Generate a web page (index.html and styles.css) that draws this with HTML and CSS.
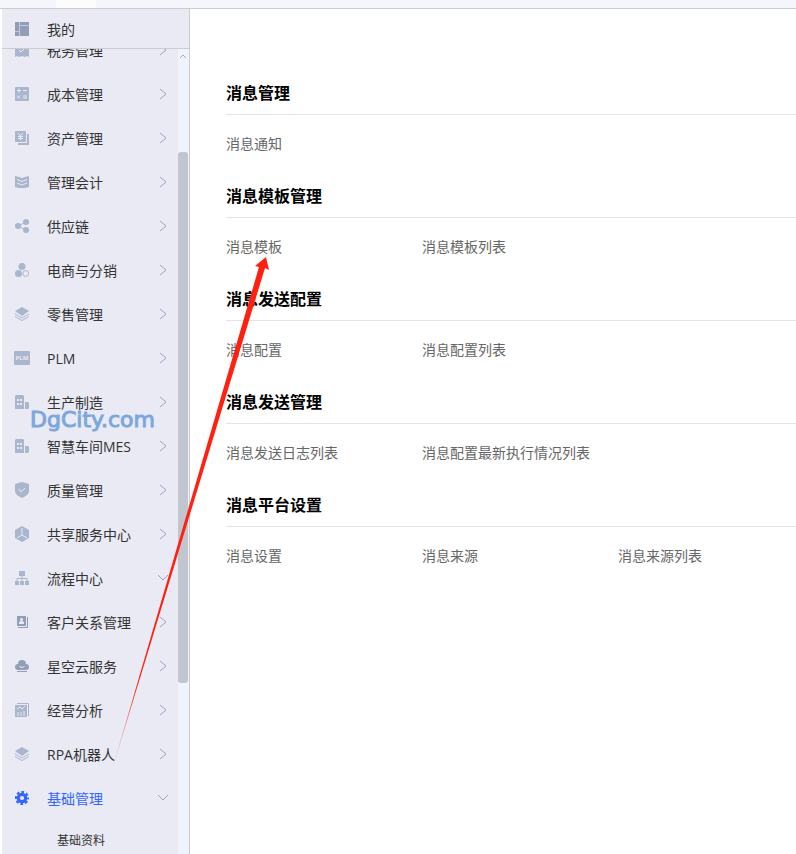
FILE: index.html
```html
<!DOCTYPE html>
<html lang="zh-CN">

<head>
    <meta charset="UTF-8">
    <meta name="viewport" content="width=device-width, initial-scale=1.0">
    <title>基础管理</title>
    <link rel="stylesheet" href="styles.css">
</head>

<body>
    <div class="topbar"><span class="tab"></span></div>
    <div class="layout">
        <aside class="sidebar">
            <button class="mine">
                <svg class="icon dark" viewBox="0 0 14 14"><path d="M0 0h4v9H0zM0 10h4v4H0zM5 0h9v3H5zM5 4h9v10H5z"/><path class="seam" d="M4.500 0v14M5 3.500h9M0 9.500h4"/></svg>
                <span>我的</span>
            </button>
            <div class="menu-wrap">
                <ul class="menu">
                    <li><button class="item">
                        <svg class="icon" viewBox="0 0 14 14"><path d="M0 0h14v14l-2-1-2 1-3-1-3 1-2-1-2 1z"/><path class="line" d="M4 7l2 2 4-4"/></svg>
                        <span>税务管理</span><svg class="arrow" viewBox="0 0 12 12"><path d="M3 1l6 5-6 5"/></svg>
                    </button></li>
                    <li><button class="item">
                        <svg class="icon" viewBox="0 0 14 14"><rect width="14" height="14" rx="1"/><path class="line" d="M2 3.500h4M4 1.500v4M8 3.500h4M2 8.500l3 3M5 8.500l-3 3M8 9h4M8 11h4"/></svg>
                        <span>成本管理</span><svg class="arrow" viewBox="0 0 12 12"><path d="M3 1l6 5-6 5"/></svg>
                    </button></li>
                    <li><button class="item">
                        <svg class="icon" viewBox="0 0 14 14"><rect width="11" height="11" rx="1"/><path d="M12 3h2v11H3v-2h9z"/><path class="line" d="M3 2l2.500 3L8 2M5.500 5v4M3 5.500h5M3 7.500h5"/></svg>
                        <span>资产管理</span><svg class="arrow" viewBox="0 0 12 12"><path d="M3 1l6 5-6 5"/></svg>
                    </button></li>
                    <li><button class="item">
                        <svg class="icon" viewBox="0 0 14 14"><path d="M0 1l4 1 3 1 3-1 4-1v11l-4 1H4l-4-1z"/><path class="line" d="M2 4.500l5 2 5-2M2 8l5 2 5-2"/></svg>
                        <span>管理会计</span><svg class="arrow" viewBox="0 0 12 12"><path d="M3 1l6 5-6 5"/></svg>
                    </button></li>
                    <li><button class="item">
                        <svg class="icon" viewBox="0 0 14 14"><path class="wire" d="M11 3L3 7l8 4"/><circle cx="3" cy="7" r="3"/><circle cx="11" cy="3" r="3"/><circle cx="11" cy="11" r="3"/></svg>
                        <span>供应链</span><svg class="arrow" viewBox="0 0 12 12"><path d="M3 1l6 5-6 5"/></svg>
                    </button></li>
                    <li><button class="item">
                        <svg class="icon" viewBox="0 0 14 14"><circle cx="7" cy="3.500" r="3.500"/><circle cx="3.500" cy="10.500" r="3.500"/><circle class="wire" cx="10.800" cy="10.500" r="2.900"/></svg>
                        <span>电商与分销</span><svg class="arrow" viewBox="0 0 12 12"><path d="M3 1l6 5-6 5"/></svg>
                    </button></li>
                    <li><button class="item">
                        <svg class="icon" viewBox="0 0 14 14"><path d="M7 0l7 4-7 5-7-5z"/><path class="wire" d="M0 7l7 4 7-4M0 9.500l7 4 7-4"/></svg>
                        <span>零售管理</span><svg class="arrow" viewBox="0 0 12 12"><path d="M3 1l6 5-6 5"/></svg>
                    </button></li>
                    <li><button class="item">
                        <svg class="icon wide" viewBox="0 0 16 14"><rect width="16" height="14" rx="1"/><text x="8" y="9">PLM</text></svg>
                        <span>PLM</span><svg class="arrow" viewBox="0 0 12 12"><path d="M3 1l6 5-6 5"/></svg>
                    </button></li>
                    <li><button class="item">
                        <svg class="icon" viewBox="0 0 14 14"><path d="M1 0h7l1 1v13H0V1zM10 7h3l1 1v5l-1 1h-3z"/><path class="dots" d="M2 4h2v2H2zM5 4h2v2H5zM2 8h2v2H2zM5 8h2v2H5z"/></svg>
                        <span>生产制造</span><svg class="arrow" viewBox="0 0 12 12"><path d="M3 1l6 5-6 5"/></svg>
                    </button></li>
                    <li><button class="item">
                        <svg class="icon" viewBox="0 0 14 14"><path d="M1 0h7l1 1v13H0V1zM10 7h3l1 1v5l-1 1h-3z"/><path class="dots" d="M2 4h2v2H2zM5 4h2v2H5zM2 8h2v2H2zM5 8h2v2H5z"/></svg>
                        <span>智慧车间MES</span><svg class="arrow" viewBox="0 0 12 12"><path d="M3 1l6 5-6 5"/></svg>
                    </button></li>
                    <li><button class="item">
                        <svg class="icon tall" viewBox="0 0 14 16"><path d="M7 0l7 2v7c0 3-3 5-7 7-4-2-7-4-7-7V2z"/><path class="line" d="M4 7l2 3 4-4"/></svg>
                        <span>质量管理</span><svg class="arrow" viewBox="0 0 12 12"><path d="M3 1l6 5-6 5"/></svg>
                    </button></li>
                    <li><button class="item">
                        <svg class="icon tall" viewBox="0 0 14 16"><path d="M7 0l7 4v8l-7 4-7-4V4z"/><path class="line" d="M7 2v7M7 9l-5 3M7 9l5 3"/></svg>
                        <span>共享服务中心</span><svg class="arrow" viewBox="0 0 12 12"><path d="M3 1l6 5-6 5"/></svg>
                    </button></li>
                    <li><button class="item">
                        <svg class="icon" viewBox="0 0 14 14"><path d="M4 0h6v5H4zM0 10h4v4H0zM5 10h4v4H5zM10 10h4v4h-4z"/><path class="wire" d="M7 5v5M2 10V7.500h10V10"/></svg>
                        <span>流程中心</span><svg class="arrow" viewBox="0 0 12 12"><path d="M1 3l5 5 5-5"/></svg>
                    </button></li>
                    <li><button class="item">
                        <svg class="icon dark" viewBox="0 0 14 14"><rect x="2" y="1" width="9" height="10"/><path d="M12 2h1v11H3v-1h9z"/><path class="dots" d="M5 4l1-1h1l1 1v1L7 6l2 1v2H4V7l2-1-1-1z"/></svg>
                        <span>客户关系管理</span><svg class="arrow" viewBox="0 0 12 12"><path d="M3 1l6 5-6 5"/></svg>
                    </button></li>
                    <li><button class="item">
                        <svg class="icon dark" viewBox="0 0 14 14"><path d="M3 11a3 3 0 0 1 0-6 4 4 0 0 1 8 0 3 3 0 0 1 0 6zM2 12h10v1H2z"/><path class="line" d="M4.500 7.500q2.500 2 5 0"/></svg>
                        <span>星空云服务</span><svg class="arrow" viewBox="0 0 12 12"><path d="M3 1l6 5-6 5"/></svg>
                    </button></li>
                    <li><button class="item">
                        <svg class="icon" viewBox="0 0 14 14"><path d="M0 2h12v12H0z"/><path class="wire" d="M2 .500h11.500V13"/><path class="line" d="M2 6l3-2 2 2 3-3M3 9v4M6 9v4M9 8v5"/></svg>
                        <span>经营分析</span><svg class="arrow" viewBox="0 0 12 12"><path d="M3 1l6 5-6 5"/></svg>
                    </button></li>
                    <li><button class="item">
                        <svg class="icon" viewBox="0 0 14 14"><path d="M7 0l7 4-7 5-7-5z"/><path class="wire" d="M0 7l7 4 7-4M0 9.500l7 4 7-4"/></svg>
                        <span>RPA机器人</span><svg class="arrow" viewBox="0 0 12 12"><path d="M3 1l6 5-6 5"/></svg>
                    </button></li>
                    <li><button class="item active">
                        <svg class="icon gear" viewBox="0 0 14 14"><circle cx="7" cy="7" r="3.700" stroke-width="3.200"/><circle cx="7" cy="7" r="6" stroke-width="2.200" stroke-dasharray="2.700 2.012" stroke-dashoffset="1.350"/></svg>
                        <span>基础管理</span><svg class="arrow" viewBox="0 0 12 12"><path d="M1 3l5 5 5-5"/></svg>
                    </button></li>
                    <li><a class="sub" href="#">基础资料</a></li>
                </ul>
                <div class="scrollbar">
                    <svg class="up" viewBox="0 0 8 8"><path d="M1 6l3-3 3 3"/></svg>
                    <div class="thumb"></div>
                </div>
            </div>
        </aside>

        <main class="content">
            <section>
                <h2>消息管理</h2>
                <div class="links"><a href="#">消息通知</a></div>
            </section>
            <section>
                <h2>消息模板管理</h2>
                <div class="links"><a href="#">消息模板</a><a href="#">消息模板列表</a></div>
            </section>
            <section>
                <h2>消息发送配置</h2>
                <div class="links"><a href="#">消息配置</a><a href="#">消息配置列表</a></div>
            </section>
            <section>
                <h2>消息发送管理</h2>
                <div class="links"><a href="#">消息发送日志列表</a><a href="#">消息配置最新执行情况列表</a></div>
            </section>
            <section>
                <h2>消息平台设置</h2>
                <div class="links"><a href="#">消息设置</a><a href="#">消息来源</a><a href="#">消息来源列表</a></div>
            </section>
        </main>
    </div>

    <div class="watermark">DgCity.com</div>
    <svg class="pointer" viewBox="0 0 166 526">
        <defs>
            <linearGradient id="fade" x1="0" y1="1" x2="0" y2="0">
                <stop offset="0" stop-color="#ff2010" stop-opacity="0"/>
                <stop offset=".2" stop-color="#ff2010"/>
            </linearGradient>
        </defs>
        <path fill="url(#fade)" d="M162 0l3 13-4-2L5 523 155 10l-4-1z"/>
    </svg>
</body>

</html>
```
FILE: styles.css
```css
* {
    box-sizing: border-box;
    margin: 0;
    padding: 0;
}

body {
    display: flex;
    flex-direction: column;
    height: 100vh;
    overflow: hidden;
    background-color: #fff;
    font-family: "Open Sans", "Noto Sans CJK SC", sans-serif;
    font-size: 14px;
    color: #333;
}

button {
    border: none;
    background: none;
    font: inherit;
    color: inherit;
    text-align: left;
    cursor: pointer;
}

a {
    color: inherit;
    text-decoration: none;
}

.topbar {
    flex: none;
    height: 9px;
    padding-left: 56px;
    background-color: #f5f6fb;
    border-bottom: 1px solid #ccc;
}

.tab {
    display: block;
    width: 40px;
    height: 8px;
    background-color: #fcfcfd;
}

.layout {
    display: flex;
    flex: 1;
    min-height: 0;
    padding-left: 2px;
}

/* sidebar */
.sidebar {
    display: flex;
    flex-direction: column;
    flex: none;
    width: 188px;
    background-color: #e9eaf4;
    border-right: 1px solid #ccc;
}

.mine,
.item {
    display: flex;
    align-items: center;
    width: 100%;
    padding: 0 9px 0 13px;
}

.mine {
    flex: none;
    height: 40px;
    border-bottom: 1px solid #ccc;
}

.item {
    height: 44px;
}

.mine span,
.item span {
    flex: 1;
    padding-top: 2px;
    line-height: 20px;
}

.menu-wrap {
    display: flex;
    flex: 1;
    min-height: 0;
    overflow: hidden;
}

/* the list is scrolled down by a part of a row */
.menu {
    flex: 1;
    margin-top: -21px;
    list-style: none;
}

.icon {
    flex: none;
    width: 14px;
    height: 14px;
    margin-right: 18px;
    fill: #aab6ce;
}

.tall {
    height: 16px;
}

.wide {
    width: 16px;
    margin-left: -1px;
    margin-right: 17px;
}

.dark {
    fill: #929eb8;
}

.icon .line {
    fill: none;
    stroke: #e9eaf4;
}

.icon .wire {
    fill: none;
    stroke: #aab6ce;
}

.icon .seam {
    fill: none;
    stroke: #c3c9da;
}

.icon .dots {
    fill: #e9eaf4;
}

.icon text {
    fill: #e9eaf4;
    font-size: 6px;
    font-weight: bold;
    text-anchor: middle;
}

.arrow {
    flex: none;
    width: 12px;
    height: 12px;
    fill: none;
    stroke: #98a4c0;
}

.active span {
    color: #3366ff;
}

.gear {
    fill: none;
    stroke: #3366ff;
}

.sub {
    display: block;
    padding-left: 55px;
    font-size: 12px;
    line-height: 42px;
}

.scrollbar {
    flex: none;
    width: 11px;
    background-color: #eff3fc;
}

.up {
    display: block;
    width: 8px;
    height: 8px;
    margin: 3px 1px 92px;
    fill: none;
    stroke: #aaa;
}

.thumb {
    width: 10px;
    height: 66%;
    border-radius: 3px;
    background-color: #c1c5ce;
}

/* content */
.content {
    flex: 1;
    min-width: 0;
    padding: 72px 0 0 36px;
    overflow: hidden;
}

section {
    padding-bottom: 30px;
}

h2 {
    padding-bottom: 9px;
    border-bottom: 1px solid #e4e4e4;
    font-size: 16px;
    line-height: 24px;
    color: #000;
}

.links {
    display: grid;
    grid-template-columns: repeat(3, 196px);
    padding-top: 19px;
    color: #666;
    line-height: 20px;
}

/* overlays */
.watermark {
    position: absolute;
    left: 30px;
    top: 407px;
    font-family: "DejaVu Sans", sans-serif;
    font-size: 22px;
    line-height: 26px;
    color: #7da7dc;
    -webkit-text-stroke: 1px #7da7dc;
    pointer-events: none;
}

.pointer {
    position: absolute;
    left: 104px;
    top: 257px;
    width: 166px;
    height: 526px;
    pointer-events: none;
}
```
